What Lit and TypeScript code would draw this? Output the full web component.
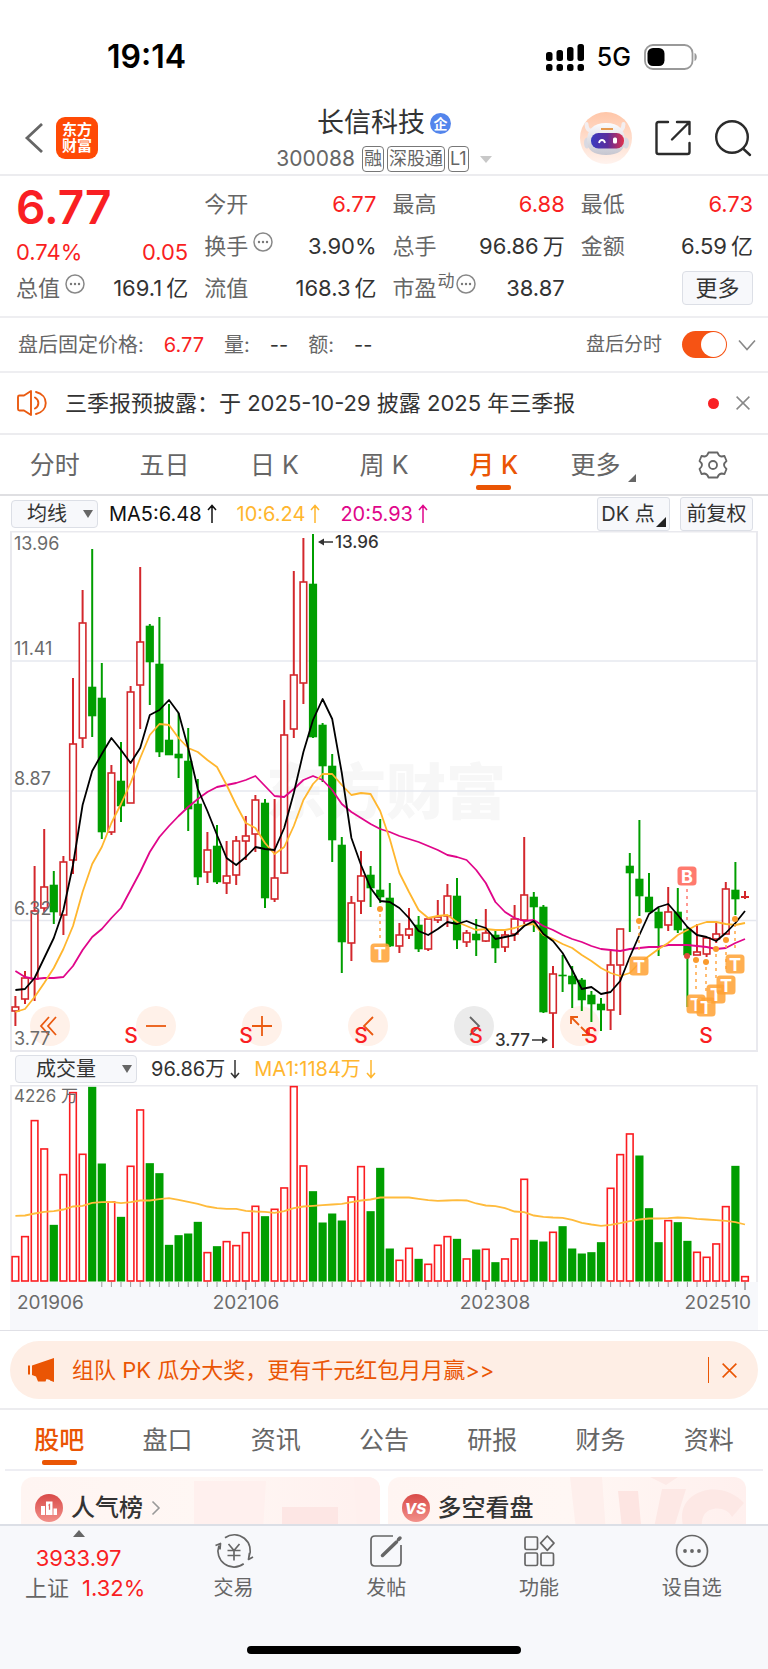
import { LitElement, html, svg, css } from "lit";
import { customElement, state } from "lit/decorators.js";
import { classMap } from "lit/directives/class-map.js";

type Candle = [dir: number, high: number, top: number, bottom: number, low: number];

// Monthly candles, in plot coordinates: 1 = rising, -1 = falling.
const CANDLES: Candle[] = [
  [1, 996, 1007, 1011, 1026], [1, 971, 978, 999, 1004], [1, 866, 911, 979, 1001], [1, 829, 887, 908, 912],
  [-1, 871, 885, 912, 924], [1, 856, 862, 915, 935], [1, 678, 744, 860, 874], [1, 590, 623, 738, 748],
  [-1, 549, 687, 716, 737], [-1, 663, 698, 832, 839], [1, 765, 773, 832, 835], [-1, 742, 781, 806, 822],
  [1, 686, 692, 803, 803], [1, 567, 642, 685, 729], [-1, 624, 626, 662, 705], [-1, 617, 664, 752, 757],
  [-1, 704, 740, 755, 755], [-1, 713, 754, 758, 778], [-1, 728, 761, 809, 831], [-1, 779, 804, 877, 885],
  [1, 832, 850, 872, 883], [-1, 825, 846, 882, 884], [1, 841, 876, 883, 894], [1, 836, 841, 875, 885],
  [1, 816, 836, 841, 860], [1, 795, 800, 834, 852], [-1, 799, 803, 898, 908], [1, 799, 878, 899, 902],
  [1, 700, 735, 873, 874], [1, 571, 675, 729, 738], [1, 538, 582, 683, 704], [-1, 534, 584, 737, 738],
  [-1, 723, 725, 766, 782], [-1, 754, 766, 840, 862], [-1, 837, 845, 942, 973], [1, 896, 903, 943, 961],
  [1, 851, 876, 901, 914], [-1, 866, 875, 888, 907], [-1, 819, 890, 897, 903], [-1, 883, 898, 946, 947],
  [1, 923, 935, 946, 953], [1, 908, 929, 935, 939], [-1, 916, 925, 949, 952], [1, 917, 919, 949, 951],
  [1, 900, 917, 920, 923], [1, 884, 896, 916, 927], [-1, 878, 896, 940, 949], [1, 930, 933, 942, 947],
  [-1, 919, 934, 940, 956], [1, 909, 933, 941, 942], [-1, 929, 935, 948, 963], [1, 931, 935, 947, 952],
  [1, 905, 919, 934, 941], [1, 837, 895, 920, 924], [-1, 892, 897, 907, 932], [-1, 905, 907, 1012, 1013],
  [1, 966, 974, 1013, 1048], [-1, 955, 975, 976, 992], [-1, 966, 976, 984, 1008], [-1, 978, 980, 1000, 1011],
  [-1, 991, 995, 1004, 1022], [-1, 998, 1004, 1010, 1031], [1, 951, 965, 1010, 1030], [1, 929, 929, 965, 1015],
  [-1, 853, 866, 873, 932], [-1, 820, 879, 896, 916], [-1, 873, 897, 912, 912], [-1, 908, 912, 928, 956],
  [1, 887, 912, 925, 931], [-1, 888, 912, 930, 933], [-1, 927, 929, 955, 1007], [1, 924, 952, 955, 955],
  [1, 938, 938, 954, 957], [1, 922, 934, 939, 943], [1, 882, 889, 934, 934], [-1, 862, 890, 899, 915],
  [1, 891, 897, 897, 899],
];

const MA5 = [990, 989, 978, 958, 938, 910, 865, 805, 771, 754, 738, 750, 763, 748, 715, 710, 700, 713, 748, 789, 811,
  835, 858, 865, 857, 847, 849, 850, 828, 793, 752, 720, 699, 719, 773, 838, 865, 888, 901, 902, 908, 918, 931, 935,
  929, 922, 924, 921, 925, 928, 939, 937, 935, 926, 921, 934, 941, 953, 970, 989, 987, 994, 992, 981, 957, 935, 914,
  907, 904, 915, 927, 935, 937, 941, 933, 923, 911];
const MA10 = [1012, 1009, 997, 983, 968, 949, 926, 892, 864, 847, 823, 804, 783, 758, 735, 724, 725, 738, 748, 752, 760,
  767, 785, 805, 823, 828, 843, 854, 847, 826, 800, 784, 774, 774, 785, 795, 793, 794, 811, 839, 873, 892, 910, 918,
  916, 915, 922, 926, 930, 929, 930, 930, 928, 925, 924, 935, 939, 944, 948, 955, 961, 968, 973, 976, 973, 963, 956,
  949, 943, 935, 930, 925, 922, 922, 924, 925, 923];
const MA20 = [971, 977, 979, 978, 978, 977, 966, 950, 937, 929, 918, 908, 890, 872, 852, 837, 826, 816, 807, 799, 792,
  787, 785, 783, 780, 776, 786, 796, 797, 789, 780, 776, 780, 790, 804, 812, 818, 824, 829, 832, 836, 839, 842, 846,
  850, 855, 857, 860, 870, 883, 902, 912, 918, 921, 920, 926, 930, 935, 939, 942, 946, 949, 950, 951, 949, 948, 947,
  947, 945, 945, 945, 946, 947, 949, 948, 943, 939];

// Monthly volume; a negative number is a falling month.
const VOLUME = [77, 137, 485, 400, -170, 323, 569, 384, -584, -354, 241, -194, 348, 517, -355, -325, -110, -139, -144,
  -179, 89, -106, 122, 110, 149, 228, -196, 219, 283, 587, 349, -271, -177, -204, -183, 256, 347, -211, -341, -99, 66,
  102, -68, 54, 111, 137, -128, 70, -96, 99, -58, 70, 130, 309, -125, -120, 150, -166, -99, -84, -88, -118, 282, 383,
  445, -378, -220, -118, 185, -178, -122, 90, 75, 115, 227, -347, 17];
const VOLUME_MA = [197, 198, 204, 209, 211, 216, 225, 227, 236, 238, 239, 235, 238, 243, 243, 247, 250, 245, 239, 233,
  225, 220, 218, 218, 212, 210, 209, 206, 211, 220, 225, 227, 229, 231, 233, 238, 243, 246, 252, 252, 252, 252, 248,
  244, 242, 243, 244, 243, 234, 228, 226, 220, 210, 208, 198, 194, 192, 191, 185, 176, 171, 167, 170, 175, 181, 186,
  189, 189, 190, 192, 191, 188, 186, 184, 182, 178, 171];

const STEP = 9.6;
const xAt = (i: number) => 15.4 + i * STEP;
const line = (ys: number[]) => ys.map((y, i) => `${xAt(i).toFixed(1)},${y}`).join(" ");

const FONT = css`
  :host {
    font-family: Inter, "Noto Sans CJK SC", "Liberation Sans", sans-serif;
  }
  * {
    box-sizing: border-box;
  }
  button {
    font: inherit;
    color: inherit;
    background: none;
    border: 0;
    padding: 0;
    margin: 0;
  }
  svg {
    display: block;
  }
`;

@customElement("price-chart")
export class PriceChart extends LitElement {
  static styles = [
    FONT,
    css`
      :host {
        display: block;
        position: relative;
      }
      .plot {
        position: relative;
        width: 100%;
        pointer-events: none;
      }
      .tools {
        position: absolute;
        bottom: 6px;
        left: 20px;
        display: flex;
        gap: 66px;
      }
      .tool {
        width: 40px;
        height: 40px;
        border-radius: 50%;
        background: #fff1e9;
        color: #ea5a10;
        display: grid;
        place-items: center;
      }
      .tool.off {
        background: #ebebeb;
        color: #666;
      }
      .frame {
        fill: none;
        stroke: #e9e9ee;
        stroke-width: 2;
      }
      .grid {
        stroke: #e6e8ef;
        stroke-width: 1.4;
      }
      .mark {
        font-size: 60px;
        font-weight: 900;
        fill: #f7f7f7;
      }
      .axis {
        font-size: 18px;
        fill: #6b6b6b;
      }
      .peak {
        font-size: 17px;
        font-weight: 500;
        fill: #333;
      }
      .arrow {
        stroke: #333;
        stroke-width: 1.5;
        fill: none;
      }
      .tip {
        fill: #333;
      }
      .up {
        fill: #fff;
        stroke: #d3272c;
        stroke-width: 1.6;
      }
      .up-wick {
        stroke: #d3272c;
        stroke-width: 2;
      }
      .down {
        fill: #009e00;
      }
      .down-wick {
        stroke: #009e00;
        stroke-width: 2;
      }
      .ma {
        fill: none;
        stroke-width: 1.8;
        stroke-linejoin: round;
      }
      .ma5 {
        stroke: #000;
      }
      .ma10 {
        stroke: #ffb62e;
      }
      .ma20 {
        stroke: #e0068a;
      }
      .sell {
        font-size: 21px;
        font-weight: 500;
        fill: #f91f23;
        text-anchor: middle;
      }
      .badge {
        fill: #ffa133;
        fill-opacity: 0.85;
      }
      .badge.buy {
        fill: #ff6b5e;
        fill-opacity: 0.9;
      }
      .badge-text {
        font-size: 18px;
        font-weight: 700;
        fill: #fff;
        text-anchor: middle;
      }
      .lead {
        stroke: #ffa846;
        stroke-width: 1.5;
        stroke-dasharray: 3 4;
      }
      .lead.buy {
        stroke: #ff7a70;
      }
      .dot {
        fill: #fa9a2c;
      }
      .dot.buy {
        fill: #e04a3c;
      }
    `,
  ];

  private trades = [
    { x: 380, dot: 909, y: 953 },
    { x: 639, dot: 921, y: 966 },
    { x: 696, dot: 960, y: 1004 },
    { x: 706, dot: 962, y: 1007 },
    { x: 716, dot: 949, y: 994 },
    { x: 726, dot: 940, y: 985 },
    { x: 735, dot: 919, y: 964 },
  ];

  private tools = [
    { name: "最早", d: "M-1-9l-8 9 8 9M6-9l-8 9 8 9", off: false },
    { name: "缩小", d: "M-10 0h20", off: false },
    { name: "放大", d: "M-10 0h20M0-10v20", off: false },
    { name: "向左", d: "M5-9l-9 9 9 9", off: false },
    { name: "向右", d: "M-4-9l9 9-9 9", off: true },
    { name: "全屏", d: "M-9-2v-7h7M-9-9l8 8M9 2v7h-7M9 9l-8-8", off: false },
  ];

  render() {
    return html`
      <div class="tools">
        ${this.tools.map(
          (t) => html`<button class=${classMap({ tool: true, off: t.off })} aria-label=${t.name}>
            <svg width="26" height="26" viewBox="-13 -13 26 26" fill="none" stroke="currentColor" stroke-width="1.8">
              <path d=${t.d} />
            </svg>
          </button>`
        )}
      </div>
      <svg class="plot" viewBox="10 531 748 521" role="img" aria-label="月K线">
        <text class="mark" x="266" y="814">东方财富</text>
        <rect class="frame" x="11" y="531.5" width="746" height="519.5" />
        ${[661, 791, 920.5].map((y) => svg`<line class="grid" x1="11" x2="757" y1=${y} y2=${y} />`)}
        ${CANDLES.map(([dir, high, top, bottom, low], i) => {
          const x = xAt(i);
          return dir > 0
            ? svg`<line class="up-wick" x1=${x} x2=${x} y1=${high} y2=${low} />
                ${
                  top === bottom
                    ? svg`<line class="up-wick" x1=${x - 4} x2=${x + 4} y1=${top} y2=${top} />`
                    : svg`<rect class="up" x=${x - 3.3} y=${top} width="6.6" height=${bottom - top} />`
                }`
            : svg`<line class="down-wick" x1=${x} x2=${x} y1=${high} y2=${low} />
                <rect class="down" x=${x - 4.1} y=${top - 0.3} width="8.2" height=${bottom - top + 0.6} />`;
        })}
        <polyline class="ma ma20" points=${line(MA20)} />
        <polyline class="ma ma10" points=${line(MA10)} />
        <polyline class="ma ma5" points=${line(MA5)} />
        ${[
          ["13.96", 550],
          ["11.41", 655],
          ["8.87", 785],
          ["6.32", 915],
          ["3.77", 1045],
        ].map(([t, y]) => svg`<text class="axis" x="14" y=${y}>${t}</text>`)}
        <path class="arrow" d="M321 542h12" />
        <path class="tip" d="M318 542l6-3.5v7z" />
        <text class="peak" x="335" y="548">13.96</text>
        <path class="arrow" d="M532 1040h12" />
        <path class="tip" d="M548 1040l-6-3.5v7z" />
        <text class="peak" x="495" y="1046">3.77</text>
        ${this.trades.map(
          (t) => svg`<line class="lead" x1=${t.x} x2=${t.x} y1=${t.dot + 5} y2=${t.y - 12} />
            <circle class="dot" cx=${t.x} cy=${t.dot} r="3" />
            <rect class="badge" x=${t.x - 9.5} y=${t.y - 9.5} width="19" height="19" rx="3.5" />
            <text class="badge-text" x=${t.x} y=${t.y + 6.5}>T</text>`
        )}
        <line class="lead buy" x1="687" x2="687" y1="889" y2="921" />
        <circle class="dot buy" cx="687" cy="956" r="3" />
        <rect class="badge buy" x="677.5" y="866.5" width="19" height="19" rx="3.5" />
        <text class="badge-text" x="687" y="882.5">B</text>
        ${[131, 246, 361, 476, 591, 706].map((x) => svg`<text class="sell" x=${x} y="1043">S</text>`)}
      </svg>
    `;
  }
}

@customElement("volume-chart")
export class VolumeChart extends LitElement {
  static styles = [
    FONT,
    css`
      :host {
        display: block;
      }
      .plot {
        width: 100%;
      }
      .frame {
        fill: none;
        stroke: #e9e9ee;
        stroke-width: 1.6;
      }
      .foot {
        fill: #f7f8fb;
      }
      .up {
        fill: #fff;
        stroke: #fb1d21;
        stroke-width: 1.6;
      }
      .down {
        fill: #009e00;
      }
      .avg {
        fill: none;
        stroke: #ffbb3c;
        stroke-width: 1.8;
      }
      .tick {
        stroke: #999;
        stroke-width: 1;
      }
      .tick.major {
        stroke-width: 1.6;
      }
      .axis {
        font-size: 17px;
        fill: #6b6b6b;
      }
      .date {
        font-size: 19px;
        fill: #6b6b6b;
      }
      .mid {
        text-anchor: middle;
      }
      .end {
        text-anchor: end;
      }
    `,
  ];

  render() {
    const base = 1281.5;
    const major = [24, 49, 76];
    return html`
      <svg class="plot" viewBox="10 1085 748 245" role="img" aria-label="成交量">
        <rect class="foot" x="10" y="1282" width="748" height="48" />
        <path class="frame" d="M11 1282V1085.8H757V1282" />
        ${VOLUME.map((v, i) => {
          const h = Math.abs(v) / 3;
          const x = xAt(i);
          return v > 0
            ? svg`<rect class="up" x=${x - 3.3} y=${base - h + 0.8} width="6.6" height=${h - 1.3} />`
            : svg`<rect class="down" x=${x - 4.1} y=${base - h} width="8.2" height=${h} />`;
        })}
        <polyline class="avg" points=${line(VOLUME_MA.map((v) => base - v / 3))} />
        <text class="axis" x="14" y="1102">4226 万</text>
        ${VOLUME.map((_, i) =>
          i < 9
            ? null
            : svg`<line class=${major.includes(i) ? "tick major" : "tick"} x1=${xAt(i)} x2=${xAt(i)} y1="1282"
                y2=${major.includes(i) ? 1290 : 1287} />`
        )}
        <text class="date" x="17" y="1309">201906</text>
        <text class="date mid" x="246" y="1309">202106</text>
        <text class="date mid" x="495" y="1309">202308</text>
        <text class="date end" x="751" y="1309">202510</text>
      </svg>
    `;
  }
}

@customElement("app-root")
export class AppRoot extends LitElement {
  @state() private period = "月 K";
  @state() private section = "股吧";

  static styles = [
    FONT,
    css`
      :host {
        display: flex;
        flex-direction: column;
        min-height: 100vh;
        background: #fff;
        color: #333;
        font-size: 22px;
        line-height: 30px;
      }
      .red {
        color: #f91f23;
      }
      .grey {
        color: #666;
      }
      .status {
        height: 100px;
        padding: 14px 70px 0 107px;
        display: flex;
        align-items: center;
        color: #000;
        font-weight: 600;
        font-size: 32px;
      }
      .status-right {
        margin-left: auto;
        display: flex;
        align-items: center;
        gap: 13px;
        font-size: 25px;
        font-weight: 500;
      }
      .header {
        height: 76px;
        padding: 0 16px;
        display: grid;
        grid-template-columns: 1fr auto 1fr;
        align-items: center;
        border-bottom: 2px solid #ececef;
      }
      .header-left {
        display: flex;
        align-items: center;
        gap: 12px;
        margin-left: 8px;
      }
      .logo {
        width: 42px;
        height: 42px;
        border-radius: 9px;
        background: #ff4a05;
        color: #fff;
        font-size: 15px;
        line-height: 16px;
        font-weight: 700;
        display: grid;
        place-content: center;
        text-align: center;
      }
      .title {
        display: flex;
        flex-direction: column;
        align-items: center;
        padding-top: 4px;
      }
      .name {
        margin: 0;
        font-size: 27px;
        line-height: 38px;
        font-weight: 400;
        display: flex;
        align-items: center;
        gap: 5px;
      }
      .corp {
        width: 21px;
        height: 21px;
        border-radius: 50%;
        background: #5385ec;
        color: #fff;
        font-size: 14px;
        line-height: 21px;
        text-align: center;
        font-weight: 700;
      }
      .code {
        display: flex;
        align-items: center;
        gap: 3px;
        color: #666;
        font-size: 21px;
        line-height: 34px;
      }
      .code-number {
        margin-right: 4px;
      }
      .tag {
        border: 1px solid #777;
        border-radius: 4px;
        font-size: 18px;
        line-height: 24px;
        padding: 0 1px;
      }
      .drop {
        margin-left: 8px;
        border: 6px solid transparent;
        border-top: 7px solid #c8c8c8;
        border-bottom: 0;
      }
      .header-right {
        justify-self: end;
        display: flex;
        align-items: center;
        gap: 22px;
      }
      .quote {
        padding: 7px 15px 7px 16px;
        display: grid;
        grid-template-columns: repeat(4, 1fr);
        column-gap: 16px;
        border-bottom: 2px solid #eeeef1;
      }
      .pair {
        display: flex;
        justify-content: space-between;
        align-items: center;
        height: 42px;
        white-space: nowrap;
      }
      .pair.short {
        height: 30px;
      }
      .price {
        height: 54px;
        font-size: 46px;
        line-height: 48px;
        font-weight: 600;
      }
      .unit {
        margin-left: 4px;
      }
      .label {
        color: #666;
        display: flex;
        align-items: center;
        gap: 5px;
      }
      .label svg {
        margin-bottom: 8px;
      }
      .label.tight {
        gap: 1px;
      }
      .sup {
        font-size: 17px;
        line-height: 18px;
        margin-bottom: 14px;
      }
      .more {
        margin-left: auto;
        width: 71px;
        height: 34px;
        border: 1px solid #dcdfe6;
        border-radius: 4px;
        background: #f7f8fb;
      }
      .after {
        height: 55px;
        padding: 0 12px 0 18px;
        display: flex;
        align-items: center;
        gap: 20px;
        font-size: 20px;
        border-bottom: 2px solid #eeeef1;
      }
      .after-switch {
        margin-left: auto;
        display: flex;
        align-items: center;
        gap: 20px;
        font-size: 19px;
        color: #666;
      }
      .switch {
        appearance: none;
        margin: 0;
        width: 45px;
        height: 27px;
        border-radius: 14px;
        background: #ccc;
        padding: 1px;
        display: flex;
      }
      .switch::before {
        content: "";
        width: 25px;
        height: 25px;
        border-radius: 50%;
        background: #fff;
      }
      .switch:checked {
        background: #f65314;
        justify-content: flex-end;
      }
      .fold {
        margin-left: -9px;
      }
      .notice {
        height: 62px;
        padding: 0 18px 0 16px;
        display: flex;
        align-items: center;
        gap: 17px;
        border-bottom: 2px solid #ececef;
      }
      .notice-dot {
        margin-left: auto;
        width: 11px;
        height: 11px;
        border-radius: 50%;
        background: #f91f23;
      }
      .tabs {
        display: flex;
        height: 61px;
        font-size: 25px;
        color: #666;
        border-bottom: 2px solid #dfdfe2;
      }
      .tab {
        flex: 1 1 0;
        display: flex;
        flex-direction: column;
        align-items: center;
        justify-content: flex-end;
        gap: 3px;
        padding-bottom: 4px;
        line-height: 34px;
        white-space: nowrap;
      }
      .tab::after {
        content: "";
        width: 35px;
        height: 5px;
        border-radius: 2px;
      }
      .tab.on {
        color: #ea5504;
        font-weight: 500;
      }
      .tab.on::after {
        background: #ea5504;
      }
      .tab-label {
        display: flex;
        align-items: center;
        gap: 8px;
      }
      .corner {
        align-self: flex-end;
        border: 4px solid #666;
        border-top-color: transparent;
        border-left-color: transparent;
      }
      .legend {
        height: 35px;
        padding: 0 15px 0 11px;
        display: flex;
        align-items: center;
        font-size: 20px;
        white-space: nowrap;
      }
      .picker {
        position: relative;
        display: flex;
      }
      .picker::after {
        content: "";
        position: absolute;
        right: 5px;
        top: 10px;
        border: 5px solid transparent;
        border-top: 8px solid #666;
        border-bottom: 0;
        pointer-events: none;
      }
      .select {
        appearance: none;
        font: inherit;
        color: #333;
        width: 87px;
        height: 28px;
        line-height: 24px;
        padding: 0 0 0 15px;
        border: 1px solid #dcdfe6;
        border-radius: 4px;
        background: #f7f8fb;
      }
      .select.wide {
        width: 122px;
        padding-left: 20px;
      }
      .averages {
        display: flex;
        gap: 19px;
        margin-left: 11px;
      }
      .avg {
        display: flex;
        align-items: center;
        gap: 4px;
      }
      .black {
        color: #111;
      }
      .yellow {
        color: #ffb62e;
      }
      .pink {
        color: #e0068a;
      }
      .legend-buttons {
        margin-left: auto;
        display: flex;
        gap: 10px;
      }
      .box {
        width: 73px;
        height: 34px;
        border: 1px solid #dcdfe6;
        border-radius: 3px;
        background: #f7f8fb;
        display: flex;
        align-items: center;
        justify-content: center;
      }
      .box-corner {
        align-self: flex-end;
        border: 5px solid #222;
        border-top-color: transparent;
        border-left-color: transparent;
        margin: 0 0 3px 1px;
      }
      .chart {
        padding: 0 10px;
      }
      .volume-row {
        height: 33px;
        padding: 0 15px;
        display: flex;
        align-items: center;
        font-size: 20px;
      }
      .volume-row .averages {
        margin-left: 14px;
        gap: 13px;
      }
      .promo-wrap {
        border-top: 1px solid #e0e0e6;
        border-bottom: 2px solid #ececef;
        padding: 10px 10px 9px;
      }
      .promo {
        height: 58px;
        border-radius: 29px;
        background: #feeee5;
        color: #ea5504;
        padding: 0 21px 0 18px;
        display: flex;
        align-items: center;
        gap: 18px;
      }
      .promo-link {
        color: inherit;
        text-decoration: none;
      }
      .promo-close {
        margin-left: auto;
        height: 26px;
        padding-left: 13px;
        border-left: 1px solid #ea5504;
        display: grid;
        place-items: center;
      }
      .tabs.sections {
        margin: 0 5px;
        border-bottom-color: #eeeef3;
      }
      .feed {
        height: 53px;
        overflow: hidden;
        padding: 6px 22px 0 21px;
        display: grid;
        grid-template-columns: 1fr 1fr;
        gap: 8px;
      }
      .card {
        height: 70px;
        border-radius: 12px;
        background: linear-gradient(90deg, #fff5f2, #fff7f4 50%, #fff0ee);
        display: flex;
        justify-content: space-between;
        overflow: hidden;
      }
      .card-title {
        margin: 0;
        padding: 12px 0 0 14px;
        height: 50px;
        display: flex;
        align-items: center;
        gap: 8px;
        font-size: 24px;
        font-weight: 500;
        white-space: nowrap;
      }
      .bottom {
        flex: 1;
        min-height: 145px;
        background: #f7f8fb;
        border-top: 2px solid #dcdfe6;
        display: flex;
        flex-direction: column;
      }
      .nav {
        display: grid;
        grid-template-columns: 1.03fr repeat(4, 1fr);
      }
      .nav-item {
        display: flex;
        flex-direction: column;
        align-items: center;
        padding-top: 8px;
        gap: 5px;
        color: #666;
        font-size: 20px;
        line-height: 30px;
        text-decoration: none;
        white-space: nowrap;
      }
      .nav-item.index {
        gap: 0;
        padding-top: 4px;
        font-size: 22px;
      }
      .up-mark {
        border: 6px solid transparent;
        border-bottom: 7px solid #666;
        border-top: 0;
        margin-bottom: 6px;
      }
      .index-line {
        display: flex;
        gap: 13px;
        padding-left: 13px;
      }
      .home {
        width: 274px;
        height: 8px;
        border-radius: 4px;
        background: #000;
        margin: auto auto 15px;
      }
      .icon {
        overflow: visible;
      }
    `,
  ];

  private dots() {
    return html`<svg width="20" height="20" viewBox="0 0 20 20">
      <circle cx="10" cy="10" r="9" fill="none" stroke="#888" stroke-width="1.5" />
      <g fill="#777"><circle cx="6" cy="10" r="1.2" /><circle cx="10" cy="10" r="1.2" /><circle cx="14" cy="10" r="1.2" /></g>
    </svg>`;
  }

  private arrow(down = false) {
    return html`<svg width="12" height="20" viewBox="0 0 12 20" fill="none" stroke="currentColor" stroke-width="1.5">
      <path d=${down ? "M6 1v17M2 14l4 4.500 4-4.500" : "M6 19V2M2 6l4-4.500 4 4.500"} />
    </svg>`;
  }

  private cross(size: number, color: string) {
    return html`<svg width=${size} height=${size} viewBox="0 0 14 14" fill="none" stroke=${color} stroke-width="1.5">
      <path d="M.6.6l12.800 12.800M13.400.6L.6 13.400" />
    </svg>`;
  }

  private renderStatus() {
    return html`<div class="status">
      <span>19:14</span>
      <div class="status-right">
        <svg width="38" height="27" viewBox="0 0 38 27">
          <rect x="0" y="8" width="6.500" height="9" rx="2.500" /><rect x="10.500" y="6" width="6.500" height="11" rx="2.500" />
          <rect x="21" y="3" width="6.500" height="14" rx="2.500" /><rect x="31.500" y="0" width="6.500" height="17" rx="2.500" />
          <rect x="0" y="20" width="6.500" height="7" rx="2.500" /><rect x="10.500" y="20" width="6.500" height="7" rx="2.500" />
          <rect x="21" y="20" width="6.500" height="7" rx="2.500" /><rect x="31.500" y="20" width="6.500" height="7" rx="2.500" />
        </svg>
        <span>5G</span>
        <svg width="54" height="26" viewBox="0 0 54 26">
          <rect x="1" y="1" width="47.500" height="24" rx="8" fill="none" stroke="#999" stroke-width="1.800" />
          <rect x="3.500" y="4" width="17" height="18" rx="5.500" />
          <path d="M50.500 9c3 1 3 7 0 8z" fill="#999" />
        </svg>
      </div>
    </div>`;
  }

  private renderHeader() {
    return html`<header class="header">
      <div class="header-left">
        <button aria-label="返回">
          <svg width="20" height="30" viewBox="0 0 20 30" fill="none" stroke="#666" stroke-width="2.800">
            <path d="M18 1L3 15l15 14" />
          </svg>
        </button>
        <div class="logo"><span>东方</span><span>财富</span></div>
      </div>
      <div class="title">
        <h1 class="name">长信科技<span class="corp">企</span></h1>
        <div class="code">
          <span class="code-number">300088</span>
          <span class="tag">融</span><span class="tag">深股通</span><span class="tag">L1</span>
          <span class="drop"></span>
        </div>
      </div>
      <div class="header-right">
        <button aria-label="智能助手">
          <svg width="52" height="52" viewBox="0 0 52 52">
            <defs>
              <linearGradient id="halo" x1="0" y1="0" x2="0" y2="1">
                <stop offset="0" stop-color="#ffc6a8" /><stop offset="1" stop-color="#fff3ee" />
              </linearGradient>
              <linearGradient id="shell" x1="0" y1="0" x2="0" y2="1">
                <stop offset="0" stop-color="#fcfcfe" /><stop offset="1" stop-color="#c6c6d0" />
              </linearGradient>
              <linearGradient id="visor" x1="0" y1="0" x2="1" y2="0">
                <stop offset="0" stop-color="#3a3cc0" /><stop offset=".5" stop-color="#5a2c9c" />
                <stop offset="1" stop-color="#e0304c" />
              </linearGradient>
            </defs>
            <circle cx="26" cy="26" r="26" fill="url(#halo)" />
            <path d="M6.500 12c0 5 2 7 7 7M43.500 12c0 5-2 7-7 7" stroke="#f3eef0" stroke-width="4" fill="none" stroke-linecap="round" />
            <ellipse cx="7" cy="31" rx="3" ry="5.500" fill="#d9d9e2" /><ellipse cx="46" cy="31" rx="3" ry="5.500" fill="#d9d9e2" />
            <path d="M26 11c13 0 19 7 19 18 0 9-7 14-19 14S7 38 7 29c0-11 6-18 19-18z" fill="url(#shell)" />
            <path d="M21 17h12" stroke="#e69a50" stroke-width="2" />
            <rect x="11" y="21" width="33" height="15.500" rx="7.500" fill="url(#visor)" />
            <path d="M19 31c1-4 5-4 6 0" stroke="#fff" stroke-width="1.800" fill="none" />
            <rect x="33" y="25.500" width="4" height="6" rx="1.500" fill="#fff" />
          </svg>
        </button>
        <button aria-label="分享">
          <svg width="38" height="36" viewBox="0 0 38 36" fill="none" stroke="#2b2b2b" stroke-width="2.400" stroke-linejoin="round" stroke-linecap="round">
            <path d="M14 2H4.500q-2 0-2 2v28q0 2 2 2h29q2 0 2-2V23M23 2h12.500v12M35 2.500L18 19.500" />
          </svg>
        </button>
        <button aria-label="搜索">
          <svg width="38" height="38" viewBox="0 0 38 38" fill="none" stroke="#2b2b2b" stroke-width="2.400" stroke-linecap="round">
            <circle cx="18" cy="18" r="15.800" /><path d="M29.500 30l6.500 6" />
          </svg>
        </button>
      </div>
    </header>`;
  }

  private renderQuote() {
    return html`<section class="quote">
      <div>
        <div class="price red">6.77</div>
        <div class="pair short red"><span>0.74%</span><span>0.05</span></div>
        <div class="pair"><span class="label">总值${this.dots()}</span><span>169.1<span class="unit">亿</span></span></div>
      </div>
      <div>
        <div class="pair"><span class="label">今开</span><span class="red">6.77</span></div>
        <div class="pair"><span class="label">换手${this.dots()}</span><span>3.90%</span></div>
        <div class="pair"><span class="label">流值</span><span>168.3<span class="unit">亿</span></span></div>
      </div>
      <div>
        <div class="pair"><span class="label">最高</span><span class="red">6.88</span></div>
        <div class="pair"><span class="label">总手</span><span>96.86<span class="unit">万</span></span></div>
        <div class="pair">
          <span class="label tight">市盈<span class="sup">动</span>${this.dots()}</span><span>38.87</span>
        </div>
      </div>
      <div>
        <div class="pair"><span class="label">最低</span><span class="red">6.73</span></div>
        <div class="pair"><span class="label">金额</span><span>6.59<span class="unit">亿</span></span></div>
        <div class="pair"><button class="more">更多</button></div>
      </div>
    </section>`;
  }

  private renderAfterHours() {
    return html`<section class="after">
        <span class="grey">盘后固定价格:</span><span class="red">6.77</span>
        <span class="grey">量:</span><span>--</span><span class="grey">额:</span><span>--</span>
        <div class="after-switch">
          <label for="after-line">盘后分时</label>
          <input id="after-line" class="switch" type="checkbox" role="switch" checked />
          <button class="fold" aria-label="展开">
            <svg width="18" height="12" viewBox="0 0 18 12" fill="none" stroke="#888" stroke-width="1.600">
              <path d="M1 1.500l8 9 8-9" />
            </svg>
          </button>
        </div>
      </section>
      <section class="notice">
        <svg width="32" height="26" viewBox="0 0 32 26" fill="none" stroke="#ea5a10" stroke-width="1.900" stroke-linejoin="round" stroke-linecap="round">
          <path d="M3.500 5.500H8L15 1v24l-7-4.500H3.500Q2 20.500 2 19V7q0-1.500 1.500-1.500zM19 7.500c4.500 2.500 4.500 8.500 0 11M20 2c13 3 13 19 0 22" />
        </svg>
        <span>三季报预披露：于 2025-10-29 披露 2025 年三季报</span>
        <span class="notice-dot"></span>
        <button aria-label="关闭">${this.cross(14, "#888")}</button>
      </section>`;
  }

  private renderPeriods() {
    const names = ["分时", "五日", "日 K", "周 K", "月 K"];
    return html`<nav class="tabs">
      ${names.map(
        (n) => html`<button class=${classMap({ tab: true, on: n === this.period })} @click=${() => (this.period = n)}>${n}</button>`
      )}
      <button class="tab"><span class="tab-label">更多<span class="corner"></span></span></button>
      <button class="tab" aria-label="设置">
        <span class="tab-label">
          <svg width="30" height="34" viewBox="0 0 30 34" fill="none" stroke="#666" stroke-width="1.800" stroke-linejoin="round">
            <path d="M10.500 4.500h9q1 3.500 4 4l3-.5 2 5q-2.500 2-2.500 4t2.500 4l-2 5-3-.5q-3 .5-4 4h-9q-1-3.500-4-4l-3 .5-2-5Q4 19 4 17t-2.500-4l2-5 3 .5q3-.5 4-4z" />
            <circle cx="15" cy="17" r="4" />
          </svg>
        </span>
      </button>
    </nav>`;
  }

  private renderCharts() {
    return html`<div class="legend">
        <span class="picker"><select class="select" aria-label="主图指标"><option>均线</option></select></span>
        <div class="averages">
          <span class="avg black">MA5:6.48${this.arrow()}</span>
          <span class="avg yellow">10:6.24${this.arrow()}</span>
          <span class="avg pink">20:5.93${this.arrow()}</span>
        </div>
        <div class="legend-buttons">
          <button class="box">DK 点<span class="box-corner"></span></button>
          <button class="box">前复权</button>
        </div>
      </div>
      <div class="chart"><price-chart></price-chart></div>
      <div class="volume-row">
        <span class="picker"><select class="select wide" aria-label="副图指标"><option>成交量</option></select></span>
        <div class="averages">
          <span class="avg">96.86万${this.arrow(true)}</span>
          <span class="avg yellow">MA1:1184万${this.arrow(true)}</span>
        </div>
      </div>
      <div class="chart"><volume-chart></volume-chart></div>`;
  }

  private renderPromo() {
    return html`<div class="promo-wrap">
      <div class="promo">
        <svg width="26" height="24" viewBox="0 0 26 24" fill="#ea5504">
          <path d="M0 7.500h2v9H0zM4 7.500L26 0v24l-4-1.500v-.5l-3.500-1-1 2.500H10l-2-5-4-1.500z" />
        </svg>
        <a class="promo-link" href="#promo">组队 PK 瓜分大奖，更有千元红包月月赢&gt;&gt;</a>
        <button class="promo-close" aria-label="关闭">${this.cross(15, "#ea5504")}</button>
      </div>
    </div>`;
  }

  private renderFeed() {
    const names = ["股吧", "盘口", "资讯", "公告", "研报", "财务", "资料"];
    return html`<nav class="tabs sections">
        ${names.map(
          (n) => html`<button class=${classMap({ tab: true, on: n === this.section })} @click=${() => (this.section = n)}>${n}</button>`
        )}
      </nav>
      <section class="feed">
        <article class="card">
          <h2 class="card-title">
            <svg width="28" height="28" viewBox="0 0 28 28">
              <defs>
                <linearGradient id="rank" x1="0" y1="0" x2="0" y2="1">
                  <stop offset="0" stop-color="#d94a48" /><stop offset="1" stop-color="#f2908a" />
                </linearGradient>
              </defs>
              <circle cx="14" cy="14" r="14" fill="url(#rank)" />
              <path d="M6 12h4v9H6zM11 7.500h6.500V21H11zM18.500 14.500h3.500V21h-3.500z" fill="#fff" />
              <path d="M13.500 11.500l1-.8v5" stroke="#e06a66" stroke-width="1.300" fill="none" />
            </svg>
            人气榜
            <svg width="10" height="16" viewBox="0 0 10 16" fill="none" stroke="#999" stroke-width="1.600">
              <path d="M1.500 1.500L8 8l-6.500 6.500" />
            </svg>
          </h2>
          <svg width="190" height="70" viewBox="0 0 190 70">
            <path d="M4 4h72l-4 66H4z" fill="#fff0ee" /><path d="M92 30h56v40H92z" fill="#fde6e4" />
            <path d="M164 0h26v70h-22z" fill="#fff0ee" />
          </svg>
        </article>
        <article class="card">
          <h2 class="card-title">
            <svg width="28" height="28" viewBox="0 0 28 28">
              <defs>
                <linearGradient id="duel" x1="0" y1="0" x2="0" y2="1">
                  <stop offset="0" stop-color="#d94a48" /><stop offset="1" stop-color="#f2908a" />
                </linearGradient>
              </defs>
              <circle cx="14" cy="14" r="14" fill="url(#duel)" />
              <text x="13.500" y="19.500" text-anchor="middle" font-size="15" font-weight="800" font-style="italic" fill="#fff">VS</text>
            </svg>
            多空看盘
          </h2>
          <svg width="180" height="70" viewBox="0 0 180 70">
            <path d="M4 0h32l5 70H12z" fill="#feefec" /><path d="M52 14h20l5 56H58z" fill="#fde5e2" />
            <path d="M96 12h24l-18 58H84z" fill="#fde8e5" />
            <path d="M178 26c-22-24-62-14-62 14 0 12 6 22 14 30h30c-22-8-28-20-22-32 6-10 24-8 28 2z" fill="#fde8e5" />
            <path d="M84 0h28l-12 8z" fill="#fdeae7" />
          </svg>
        </article>
      </section>`;
  }

  private renderNav() {
    const items = [
      {
        name: "交易",
        icon: svg`<path d="M8 3.700A16 16 0 0 1 32 23M26.700 29.800A16 16 0 0 1 2 11.500M-1.500 11.500l5-2-.5 6M32.500 19l-1 6.500 4.500-2.500M11.500 10l5.500 6.500 5.500-6.500M10.500 16.500h13M10.500 21.500h13M17 16.500v10" />`,
      },
      {
        name: "发帖",
        icon: svg`<path d="M24 2H6Q2 2 2 6v22q0 4 4 4h22q4 0 4-4V11" /><path d="M13.500 21.500L27.500 8M29.500 5.500l1.500-1.500" stroke-width="3.500" stroke-linecap="round" />`,
      },
      {
        name: "功能",
        icon: svg`<rect x="3" y="3" width="12.500" height="12.500" rx="1.500" /><rect x="3" y="19" width="12.500" height="12.500" rx="1.500" /><rect x="19" y="19" width="12.500" height="12.500" rx="1.500" /><path d="M25.300 2l6.700 7.200-6.700 7.200-6.700-7.200z" />`,
      },
      {
        name: "设自选",
        icon: svg`<circle cx="17" cy="17" r="15.500" /><g fill="#666" stroke="none"><circle cx="10" cy="17" r="1.900" /><circle cx="17" cy="17" r="1.900" /><circle cx="24" cy="17" r="1.900" /></g>`,
      },
    ];
    return html`<footer class="bottom">
      <nav class="nav">
        <a class="nav-item index" href="#index">
          <span class="up-mark"></span>
          <span class="red">3933.97</span>
          <span class="index-line"><span>上证</span><span class="red">1.32%</span></span>
        </a>
        ${items.map(
          (it) => html`<a class="nav-item" href="#nav">
            <svg class="icon" width="34" height="34" viewBox="0 0 34 34" fill="none" stroke="#666" stroke-width="1.700" stroke-linejoin="round">${it.icon}</svg>
            ${it.name}
          </a>`
        )}
      </nav>
      <div class="home"></div>
    </footer>`;
  }

  render() {
    return html`
      ${this.renderStatus()} ${this.renderHeader()} ${this.renderQuote()} ${this.renderAfterHours()}
      ${this.renderPeriods()} ${this.renderCharts()} ${this.renderPromo()} ${this.renderFeed()} ${this.renderNav()}
    `;
  }
}
